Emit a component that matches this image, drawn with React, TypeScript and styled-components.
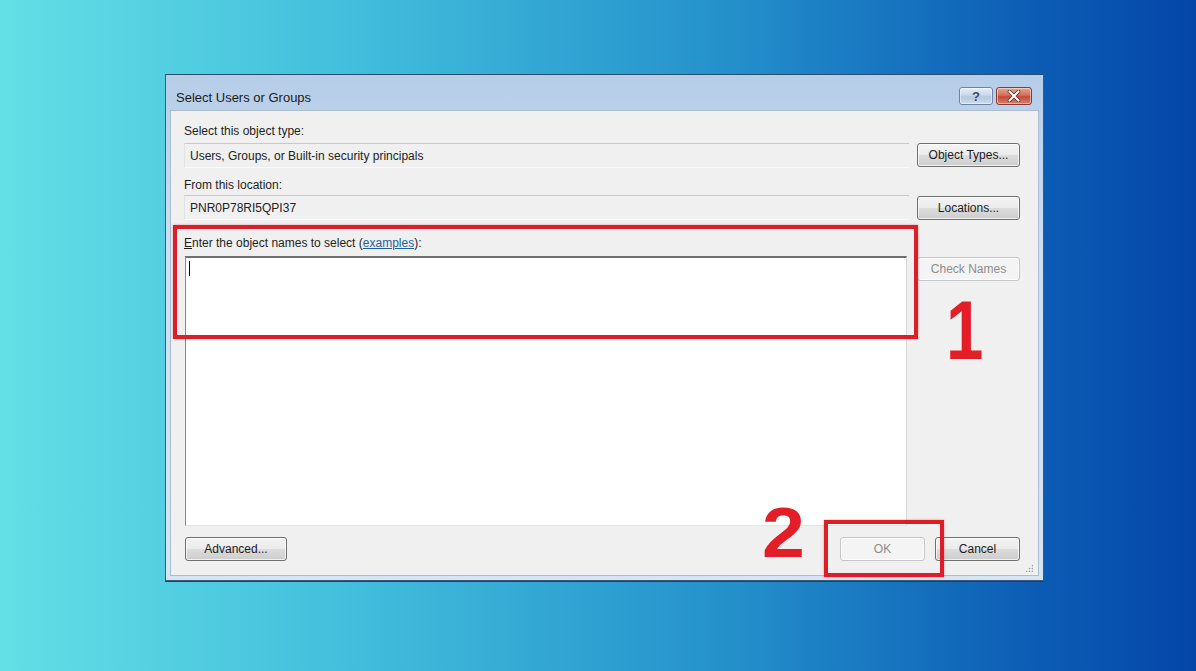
import styled, { createGlobalStyle } from "styled-components";

const Global = createGlobalStyle`
  html, body {
    margin: 0;
    padding: 0;
  }
  body {
    font-family: "Liberation Sans", Arial, sans-serif;
    font-size: 12px;
    color: #1b1b1b;
  }
`;

const Page = styled.div`
  width: 1196px;
  height: 671px;
  box-sizing: border-box;
  padding: 74px 0 0 165px;
  background: linear-gradient(90deg, #63dfe6 0%, #42bddc 30%, #2592cc 60%, #0d5fb6 85%, #0446a8 100%);
  overflow: hidden;
`;

const Dialog = styled.div`
  position: relative;
  width: 879px;
  height: 507px;
  box-sizing: border-box;
  display: flex;
  flex-direction: column;
  border: 1px solid #3d5a7c;
  border-top-color: #2f4a6a;
  background: linear-gradient(180deg, #b6cde8 0%, #cfdff2 35%, #d6e4f3 100%);
  box-shadow: 0 1px 0 #1e3f66;
`;

const TitleBar = styled.div`
  height: 35px;
  box-sizing: border-box;
  display: flex;
  align-items: flex-start;
  padding: 12px 11px 0 10px;
  gap: 3px;
`;

const Title = styled.div`
  flex: 1;
  font-size: 13px;
  line-height: 16px;
  margin-top: 3px;
  color: #1a1a1a;
`;

const CaptionButton = styled.div<{ $close?: boolean }>`
  width: ${(p) => (p.$close ? 36 : 34)}px;
  height: 18px;
  box-sizing: border-box;
  border: 1px solid ${(p) => (p.$close ? "#8a3a32" : "#6d84a2")};
  border-radius: 3px;
  display: flex;
  align-items: center;
  justify-content: center;
  background: ${(p) =>
    p.$close
      ? "linear-gradient(180deg, #e8a593 0%, #d2705d 45%, #c24b37 55%, #d7806c 100%)"
      : "linear-gradient(180deg, #e6eef8 0%, #c9d8ea 45%, #b4c8e0 55%, #cfdcec 100%)"};
  color: #3b4d66;
  font-size: 13px;
  font-weight: bold;
  box-shadow: inset 0 0 0 1px rgba(255, 255, 255, 0.45);
`;

const Client = styled.div`
  flex: 1;
  margin: 0 4px 4px;
  background: #f0f0f0;
  border: 1px solid #a9bdd5;
  padding: 13px 18px 14px 13px;
  display: grid;
  grid-template-columns: 1fr 103px;
  grid-template-rows: auto auto auto auto auto 1fr auto;
  column-gap: 8px;
`;

const Label = styled.div<{ $gap: number }>`
  grid-column: 1;
  line-height: 14px;
  margin-top: ${(p) => p.$gap}px;
  color: #1e1e1e;
`;

const Field = styled.div<{ $gap: number }>`
  grid-column: 1;
  margin-top: ${(p) => p.$gap}px;
  box-sizing: border-box;
  height: 25px;
  padding: 0 5px;
  display: flex;
  align-items: center;
  background: #f0f0f0;
  border-top: 1px solid #c9c9c9;
  border-left: 1px solid #e2e2e2;
  border-bottom: 1px solid #fafafa;
  color: #222;
`;

const Button = styled.div<{ $disabled?: boolean; $width?: number; $gap?: number }>`
  width: ${(p) => (p.$width ? `${p.$width}px` : "auto")};
  height: 24px;
  margin-top: ${(p) => p.$gap ?? 0}px;
  box-sizing: border-box;
  border-radius: 3px;
  display: flex;
  align-items: center;
  justify-content: center;
  border: 1px solid ${(p) => (p.$disabled ? "#c4c6c8" : "#707070")};
  background: ${(p) =>
    p.$disabled
      ? "#f4f4f4"
      : "linear-gradient(180deg, #f4f4f4 0%, #ebebeb 48%, #dcdcdc 52%, #cdcdcd 100%)"};
  color: ${(p) => (p.$disabled ? "#8d8d8d" : "#1b1b1b")};
  box-shadow: inset 0 0 0 1px rgba(255, 255, 255, 0.7);
`;

const SideButton = styled(Button)`
  grid-column: 2;
  align-self: start;
`;

const Link = styled.span`
  color: #1f5fa8;
  text-decoration: underline;
`;

const Underline = styled.span`
  text-decoration: underline;
`;

const NamesBox = styled.div`
  grid-column: 1;
  margin: 6px 2px 0 1px;
  background: #ffffff;
  border-top: 2px solid #6f6f6f;
  border-left: 1px solid #8a8a8a;
  border-right: 1px solid #dadada;
  border-bottom: 1px solid #e4e4e4;
  position: relative;
`;

const Caret = styled.div`
  position: absolute;
  left: 3px;
  top: 3px;
  width: 1px;
  height: 15px;
  background: #000;
`;

const Footer = styled.div`
  grid-column: 1 / span 2;
  margin-top: 11px;
  display: flex;
  align-items: center;
  gap: 10px;
  padding-left: 1px;
`;

const Spacer = styled.div`
  flex: 1;
`;

const Grip = styled.div`
  position: absolute;
  right: 10px;
  bottom: 8px;
  width: 8px;
  height: 8px;
  background-image: radial-gradient(circle, #9aa3ad 0.8px, transparent 1.1px);
  background-size: 3px 3px;
  clip-path: polygon(100% 0, 100% 100%, 0 100%);
`;

const Highlight = styled.div<{ $l: number; $t: number; $w: number; $h: number }>`
  position: absolute;
  left: ${(p) => p.$l}px;
  top: ${(p) => p.$t}px;
  width: ${(p) => p.$w}px;
  height: ${(p) => p.$h}px;
  box-sizing: border-box;
  border: 4px solid #dc1f26;
  box-shadow: 0 0 2px rgba(220, 31, 38, 0.5);
  pointer-events: none;
`;

const StepNumber = styled.div<{ $l: number; $t: number; $size: number; $sx: number }>`
  position: absolute;
  left: ${(p) => p.$l}px;
  top: ${(p) => p.$t}px;
  font-family: "Liberation Sans", Arial, sans-serif;
  font-weight: bold;
  font-size: ${(p) => p.$size}px;
  line-height: 1;
  color: #e41e26;
  transform: scaleX(${(p) => p.$sx});
  transform-origin: left top;
`;

const CloseIcon = () => (
  <svg width="14" height="12" viewBox="0 0 14 12">
    <path d="M2.5 1.5 L11.5 10.5 M11.5 1.5 L2.5 10.5" stroke="#6a2018" strokeWidth="3.6" strokeLinecap="round" />
    <path d="M2.5 1.5 L11.5 10.5 M11.5 1.5 L2.5 10.5" stroke="#ffffff" strokeWidth="2.2" strokeLinecap="round" />
  </svg>
);

export default function App() {
  return (
    <Page>
      <Global />
      <Dialog>
        <TitleBar>
          <Title>Select Users or Groups</Title>
          <CaptionButton>?</CaptionButton>
          <CaptionButton $close>
            <CloseIcon />
          </CaptionButton>
        </TitleBar>
        <Client>
          <Label $gap={0}>Select this object type:</Label>
          <Field $gap={5}>Users, Groups, or Built-in security principals</Field>
          <SideButton $gap={5}>Object Types...</SideButton>
          <Label $gap={10}>From this location:</Label>
          <Field $gap={3}>PNR0P78RI5QPI37</Field>
          <SideButton $gap={4}>Locations...</SideButton>
          <Label $gap={16}>
            <Underline>E</Underline>nter the object names to select (<Link>examples</Link>):
          </Label>
          <NamesBox>
            <Caret />
          </NamesBox>
          <SideButton $disabled $gap={7}>
            Check Names
          </SideButton>
          <Footer>
            <Button $width={102}>Advanced...</Button>
            <Spacer />
            <Button $disabled $width={85}>
              OK
            </Button>
            <Button $width={85}>Cancel</Button>
          </Footer>
        </Client>
        <Grip />
        <Highlight $l={7} $t={150} $w={745} $h={114} />
        <Highlight $l={658} $t={445} $w={120} $h={57} />
        <StepNumber $l={780} $t={213} $size={84} $sx={0.8}>
          1
        </StepNumber>
        <StepNumber $l={596} $t={423} $size={70} $sx={1.1}>
          2
        </StepNumber>
      </Dialog>
    </Page>
  );
}
